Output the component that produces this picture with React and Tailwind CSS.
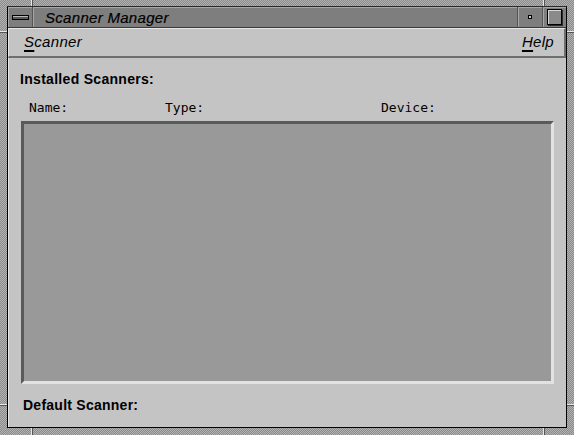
const frameBg =
  "bg-[repeating-conic-gradient(#8a8a8a_0_25%,#b2b2b2_0_50%)] bg-[length:2px_2px]";

function Notch({ className }) {
  // small light/dark cut marks in the resize frame
  return <div className={"absolute " + className} />;
}

function TitleBar() {
  return (
    <div className="flex h-[21px] bg-[#7e7e7e] border-b border-[#3a3a3a]">
      <div className="flex w-[25px] items-center justify-center border-r border-[#555] shadow-[inset_1px_1px_0_#a8a8a8]">
        <div className="h-[5px] w-[17px] border border-black bg-[#5a5a5a] shadow-[inset_0_1px_0_#b8b8b8]" />
      </div>
      <div className="flex flex-1 items-center pl-[12px] shadow-[inset_1px_1px_0_#a8a8a8]">
        <span className="font-['Liberation_Sans',Arial,sans-serif] text-[15px] italic tracking-[0.3px] text-black leading-none [-webkit-text-stroke:0.2px_black]">
          Scanner Manager
        </span>
      </div>
      <div className="flex w-[25px] items-center justify-center border-l border-[#555] shadow-[inset_1px_1px_0_#a8a8a8]">
        <div className="h-[4px] w-[4px] border border-black bg-[#c8c8c8]" />
      </div>
      <div className="flex w-[24px] items-center justify-center border-l border-[#555] shadow-[inset_1px_1px_0_#a8a8a8]">
        <div className="h-[16px] w-[15px] border border-black bg-[#8a8a8a] shadow-[inset_1px_1px_0_#d6d6d6,1px_1px_0_#2a2a2a]" />
      </div>
    </div>
  );
}

function MenuBar() {
  return (
    <div className="flex h-[30px] items-center justify-between border-t border-l border-t-[#e6e6e6] border-l-[#e6e6e6] border-b-2 border-r-2 border-b-[#6e6e6e] border-r-[#6e6e6e] bg-[#c4c4c4] pl-[15px] pr-[10px] font-['Liberation_Sans',Arial,sans-serif] text-[15px] italic tracking-[0.3px] text-black">
      <span>
        <span className="underline decoration-2 underline-offset-[3px]">S</span>canner
      </span>
      <span>
        <span className="underline decoration-2 underline-offset-[3px]">H</span>elp
      </span>
    </div>
  );
}

export default function App() {
  return (
    <div className={"relative h-[435px] w-[574px] overflow-hidden pt-[6px] pl-[7px] pr-[7px] pb-[7px] " + frameBg}>
      <Notch className="left-[31px] top-0 h-[6px] w-[2px] border-l border-[#e8e8e8] bg-[#555]" />
      <Notch className="left-[543px] top-0 h-[6px] w-[2px] border-l border-[#e8e8e8] bg-[#555]" />
      <Notch className="left-[31px] bottom-0 h-[7px] w-[2px] border-l border-[#e8e8e8] bg-[#555]" />
      <Notch className="left-[543px] bottom-0 h-[7px] w-[2px] border-l border-[#e8e8e8] bg-[#555]" />
      <Notch className="left-0 top-[31px] h-[2px] w-[7px] border-t border-[#e8e8e8] bg-[#555]" />
      <Notch className="right-0 top-[31px] h-[2px] w-[7px] border-t border-[#e8e8e8] bg-[#555]" />
      <Notch className="left-0 top-[404px] h-[2px] w-[7px] border-t border-[#e8e8e8] bg-[#555]" />
      <Notch className="right-0 top-[404px] h-[2px] w-[7px] border-t border-[#e8e8e8] bg-[#555]" />

      <div className="flex h-full flex-col border border-black border-t-[#2a2a2a]">
        <TitleBar />
        <MenuBar />

        <div className="flex flex-1 flex-col bg-[#c4c4c4] border-l border-[#e6e6e6] pl-[11px] pr-[11px] pt-[13px]">
          <div className="font-['Liberation_Sans',Arial,sans-serif] text-[14px] font-bold tracking-[0.3px] leading-[17px] text-black">
            Installed Scanners:
          </div>
          <div className="relative mt-[12px] h-[16px] font-['DejaVu_Sans_Mono',monospace] text-[13px] leading-[16px] text-black">
            <span className="absolute left-[9px]">Name:</span>
            <span className="absolute left-[145px]">Type:</span>
            <span className="absolute left-[361px]">Device:</span>
          </div>
          <div className="mt-[5px] ml-[1px] h-[263px] w-[533px] border-[3px] border-t-[#5a5a5a] border-l-[#5a5a5a] border-b-[#e2e2e2] border-r-[#e2e2e2] bg-[#999999]" />
          <div className="mt-[13px] ml-[3px] font-['Liberation_Sans',Arial,sans-serif] text-[14px] font-bold tracking-[0.25px] leading-[17px] text-black">
            Default Scanner:
          </div>
        </div>
      </div>
    </div>
  );
}
